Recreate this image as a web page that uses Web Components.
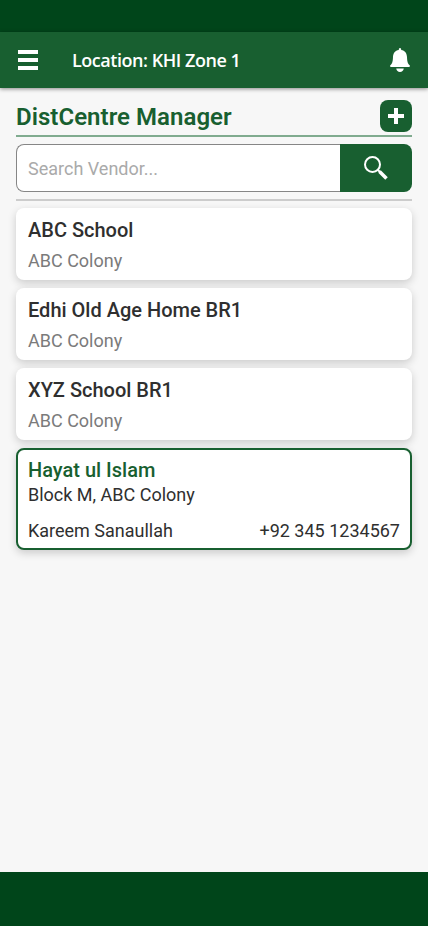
<!DOCTYPE html>
<html lang="en">
<head>
<meta charset="utf-8">
<title>DistCentre Manager</title>
<style>
html,body{margin:0;height:100%}
body{font-family:Roboto,"Liberation Sans",sans-serif;background:#f7f7f7;overflow:hidden;
--green:#185f30;--dark:#00451a;--ink:#2f2f2f;--muted:#7b7b7b}
</style>
</head>
<body>
<dc-app></dc-app>
<script>
function define(name, html){
  const t=document.createElement('template');
  t.innerHTML=html;
  customElements.define(name,class extends HTMLElement{
    constructor(){super();this.attachShadow({mode:'open'}).append(t.content.cloneNode(true));}
  });
}
define('dc-system-bar',`<style>:host{display:block;background:var(--dark);flex:none}</style>`);
define('dc-header',`<style>
:host{display:flex;align-items:center;box-sizing:border-box;height:56px;flex:none;background:var(--green);color:#fff;padding:0 16px 0 18px;box-shadow:0 1px 4px rgba(0,0,0,.45);z-index:1}
svg{display:block;flex:none}
h1{margin:0 auto 0 34px;font:600 18px/24px "Open Sans","Noto Sans",sans-serif;letter-spacing:-.46px;white-space:nowrap}
</style>
<svg width="20" height="20" fill="#fff"><path d="M0 0h20v4H0zM0 8h20v4H0zM0 16h20v4H0z"/></svg>
<h1><slot></slot></h1>
<svg width="24" height="24" fill="#fff"><path d="M12 0c.9 0 1.200.7 1.200 1.900C17 2.500 18.800 5 19 9c.2 5 .8 6.600 2.400 7.900.8.6.7 2.100-.4 2.100H3c-1.100 0-1.200-1.500-.4-2.100C4.200 15.600 4.800 14 5 9c.2-4 2-6.500 5.800-7.100C10.800.7 11.100 0 12 0ZM8.200 20.500h7.600c-.4 2-1.800 3.500-3.800 3.500s-3.400-1.500-3.800-3.500Z"/></svg>`);
define('dc-title',`<style>
:host{display:flex;justify-content:space-between;box-sizing:border-box;height:37px;border-bottom:2px solid #80ab8f}
h2{margin:0;font-size:24px;line-height:34px;font-weight:600;letter-spacing:.04px;color:var(--green);white-space:nowrap}
button{width:32px;height:32px;border:0;border-radius:8px;padding:0;background:var(--green)}
svg{display:block;margin:auto}
</style><h2><slot></slot></h2>
<button aria-label="Add"><svg width="16" height="16" fill="#fff"><path d="M6 0h4v6h6v4h-6v6H6v-6H0V6h6z"/></svg></button>`);
define('dc-search',`<style>
:host{display:flex;height:48px}
input{box-sizing:border-box;flex:1;min-width:0;border:1px solid #868686;border-right:0;border-radius:8px 0 0 8px;padding:1px 11px 0;font:18px/24px Roboto,sans-serif;background:#fff;outline:0}
input::placeholder{color:#aaa;opacity:1}
button{width:72px;border:0;border-radius:0 8px 8px 0;background:var(--green);padding:0}
svg{display:block;margin:auto}
</style><input placeholder="Search Vendor...">
<button aria-label="Search"><svg width="24" height="24" fill="none" stroke="#fff"><circle cx="8.500" cy="8.500" r="7.500" stroke-width="2"/><path d="M13.500 13.500l2.500 2.500" stroke-width="2"/><path d="M15.500 15.500l7 7" stroke-width="3.600"/></svg></button>`);
define('dc-vendor',`<style>
:host{display:block;box-sizing:border-box;height:72px;background:#fff;border-radius:8px;padding:8px 12px;box-shadow:0 3px 8px rgba(0,0,0,.18);white-space:nowrap;font-size:18px;line-height:24px;color:var(--ink)}
h3{margin:0;font-size:20px;line-height:28px;font-weight:500}
.place{margin-top:5px;color:var(--muted)}
.contact{display:none;justify-content:space-between;margin-top:12px}
:host([selected]){height:102px;border:2px solid var(--green);padding:6px 10px}
:host([selected]) h3{color:var(--green)}
:host([selected]) .place{margin-top:-1px;color:inherit}
:host([selected]) .contact{display:flex}
</style><h3><slot name="name"></slot></h3><div class="place"><slot></slot></div>
<div class="contact"><slot name="person"></slot><slot name="phone"></slot></div>`);
define('dc-app',`<style>
:host{display:flex;flex-direction:column;height:100vh}
.top{height:32px}.bottom{height:54px}
main{flex:1;padding:12px 16px 0}
dc-search{margin:7px 0}
.rule{height:2px;background:#ccc;margin-bottom:7px}
.list{display:grid;gap:8px}
</style>
<dc-system-bar class="top"></dc-system-bar>
<dc-header>Location: KHI Zone 1</dc-header>
<main><dc-title>DistCentre Manager</dc-title><dc-search></dc-search><div class="rule"></div>
<div class="list">
<dc-vendor><span slot="name">ABC School</span>ABC Colony</dc-vendor>
<dc-vendor><span slot="name">Edhi Old Age Home BR1</span>ABC Colony</dc-vendor>
<dc-vendor><span slot="name">XYZ School BR1</span>ABC Colony</dc-vendor>
<dc-vendor selected><span slot="name">Hayat ul Islam</span>Block M, ABC Colony<span slot="person">Kareem Sanaullah</span><span slot="phone">+92 345 1234567</span></dc-vendor>
</div></main>
<dc-system-bar class="bottom"></dc-system-bar>`);
</script>
</body>
</html>
